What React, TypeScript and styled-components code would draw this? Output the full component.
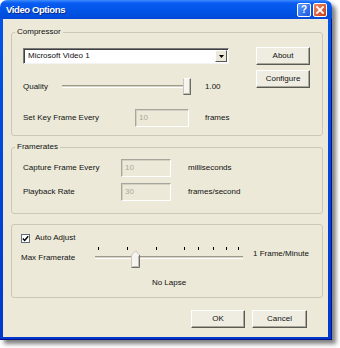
import React from "react";
import styled, { createGlobalStyle } from "styled-components";

const Global = createGlobalStyle`
  html, body { margin: 0; padding: 0; background: #ffffff; }
  body {
    font-family: "Liberation Sans", Arial, sans-serif;
    font-size: 8px;
    line-height: 10px;
    color: #111;
  }
  * { box-sizing: border-box; }
`;

const Stage = styled.div`
  width: 340px;
  height: 348px;
`;

const Window = styled.div`
  width: 332px;
  height: 340px;
  display: flex;
  flex-direction: column;
  border-radius: 7px 7px 0 0;
  box-shadow: 4px 4px 4px rgba(0, 0, 0, 0.5);
  overflow: hidden;
`;

const TitleBar = styled.div`
  height: 19px;
  flex: none;
  display: flex;
  align-items: center;
  padding: 0 5px 0 6px;
  background: linear-gradient(#3d8dff 0px, #0a5cf2 3px, #0055e6 55%, #0049da 100%);
`;

const TitleText = styled.div`
  flex: 1;
  color: #fff;
  font-weight: bold;
  font-size: 9.5px;
  letter-spacing: -0.4px;
  text-shadow: 1px 1px 0 #0a2a8a;
`;

const CaptionButton = styled.div<{ $kind: "help" | "close" }>`
  width: 14px;
  height: 14px;
  margin-left: 2px;
  border: 1px solid #fff;
  border-radius: 2px;
  display: flex;
  align-items: center;
  justify-content: center;
  color: #fff;
  font-weight: bold;
  font-size: 10px;
  background: ${(p) =>
    p.$kind === "help"
      ? "linear-gradient(135deg, #5d9bff, #1a56e0)"
      : "linear-gradient(135deg, #f08a64, #c93e18)"};
`;

const Frame = styled.div`
  flex: 1;
  display: flex;
  padding: 0 3px 2px 3px;
  background: linear-gradient(to bottom, #0055e6, #0038cc);
  border-right: 1px solid #00138c;
  border-bottom: 1px solid #00138c;
`;

const Client = styled.div`
  flex: 1;
  background: #ece9d8;
  display: flex;
  flex-direction: column;
  padding: 13px 5px 0 8px;
`;

const Group = styled.div<{ $h: number; $mt: number }>`
  position: relative;
  height: ${(p) => p.$h}px;
  margin-top: ${(p) => p.$mt}px;
  border: 1px solid #cbc8b6;
  border-radius: 3px;
`;

const Legend = styled.span`
  position: absolute;
  top: -6px;
  left: 3px;
  padding: 0 2px;
  background: #ece9d8;
`;

const CompressorBody = styled.div`
  display: grid;
  grid-template-columns: 1fr 54px;
  column-gap: 10px;
  padding: 14px 12px 0 11px;
`;

const Column = styled.div`
  display: flex;
  flex-direction: column;
`;

const Combo = styled.div`
  margin-top: 1px;
  width: 206px;
  height: 16px;
  display: flex;
  align-items: center;
  background: #fff;
  border: 1px solid;
  border-color: #7a7a7a #f4f4f4 #f4f4f4 #7a7a7a;
  box-shadow: inset 1px 1px 0 #404040;
  padding: 1px 1px 1px 4px;
`;

const ComboText = styled.span`
  flex: 1;
`;

const DropButton = styled.div`
  width: 12px;
  height: 12px;
  display: flex;
  align-items: center;
  justify-content: center;
  background: #ece9d8;
  border: 1px solid;
  border-color: #fff #555 #555 #fff;
`;

const Row = styled.div<{ $mt: number; $h?: number }>`
  display: flex;
  align-items: center;
  margin-top: ${(p) => p.$mt}px;
  height: ${(p) => p.$h ?? 18}px;
`;

const Label = styled.span<{ $w: number }>`
  width: ${(p) => p.$w}px;
  flex: none;
  white-space: nowrap;
`;

const Unit = styled.span<{ $ml: number }>`
  margin-left: ${(p) => p.$ml}px;
  white-space: nowrap;
`;

const Field = styled.div<{ $w: number }>`
  width: ${(p) => p.$w}px;
  height: 18px;
  flex: none;
  display: flex;
  align-items: center;
  padding-left: 3px;
  color: #aca899;
  background: #ece9d8;
  border: 1px solid;
  border-color: #a7a69c #ffffff #ffffff #a7a69c;
  box-shadow: inset 1px 1px 0 #d4d0c4;
`;

const Button = styled.div<{ $w: number; $mt?: number }>`
  width: ${(p) => p.$w}px;
  height: 18px;
  margin-top: ${(p) => p.$mt ?? 0}px;
  display: flex;
  align-items: center;
  justify-content: center;
  background: #efede2;
  border: 1px solid;
  border-color: #ffffff #5a5a54 #5a5a54 #ffffff;
  box-shadow: inset -1px -1px 0 #aca899;
`;

const Slider = styled.div<{ $w: number; $h: number }>`
  position: relative;
  width: ${(p) => p.$w}px;
  height: ${(p) => p.$h}px;
  flex: none;
`;

const Track = styled.div<{ $top: number }>`
  position: absolute;
  left: 0;
  right: 0;
  top: ${(p) => p.$top}px;
  height: 3px;
  border-top: 1px solid #9d9a8c;
  border-bottom: 1px solid #ffffff;
  background: #d6d3c4;
`;

const Thumb = styled.div<{ $top: number }>`
  position: absolute;
  top: ${(p) => p.$top}px;
  width: 8px;
  height: 17px;
  background: #f5f4ef;
  border: 1px solid;
  border-color: #ffffff #6e6d66 #6e6d66 #c9c7ba;
  box-shadow: inset -1px -1px 0 #bdbbb0;
`;

const PointThumb = styled.svg`
  position: absolute;
  top: 4px;
`;

const Tick = styled.div`
  position: absolute;
  top: 1px;
  width: 1px;
  height: 3px;
  background: #000;
`;

const FramerateBody = styled.div`
  display: flex;
  flex-direction: column;
  padding: 11px 0 0 11px;
`;

const AdjustBody = styled.div`
  display: flex;
  flex-direction: column;
  padding: 8px 0 0 8px;
`;

const CheckRow = styled.div`
  display: flex;
  align-items: center;
  height: 10px;
  margin-left: 1px;
`;

const CheckBox = styled.div`
  width: 9px;
  height: 9px;
  background: #fff;
  border: 1px solid #5e6a78;
  display: flex;
  align-items: center;
  justify-content: center;
  margin-right: 5px;
`;

const MaxRow = styled.div`
  display: flex;
  margin-top: 3px;
  padding-left: 1px;
`;

const MaxLabel = styled.span`
  width: 74px;
  margin-top: 7px;
  white-space: nowrap;
`;

const SliderColumn = styled.div`
  display: flex;
  flex-direction: column;
  align-items: center;
`;

const Caption = styled.span`
  margin-top: 10px;
  white-space: nowrap;
`;

const RateText = styled.span`
  margin: 3px 0 0 10px;
  white-space: nowrap;
`;

const ButtonRow = styled.div`
  display: flex;
  justify-content: flex-end;
  gap: 7px;
  margin-top: 12px;
  padding-right: 16px;
`;

const ticks = [3, 32, 61, 89, 103, 118, 131, 143];

export default function App() {
  return (
    <Stage>
      <Global />
      <Window>
        <TitleBar>
          <TitleText>Video Options</TitleText>
          <CaptionButton $kind="help">?</CaptionButton>
          <CaptionButton $kind="close">
            <svg width="8" height="8" viewBox="0 0 8 8">
              <path d="M1 1 L7 7 M7 1 L1 7" stroke="#fff" strokeWidth="1.8" strokeLinecap="square" />
            </svg>
          </CaptionButton>
        </TitleBar>
        <Frame>
          <Client>
            <Group $h={104} $mt={0}>
              <Legend>Compressor</Legend>
              <CompressorBody>
                <Column>
                  <Combo>
                    <ComboText>Microsoft Video 1</ComboText>
                    <DropButton>
                      <svg width="5" height="3" viewBox="0 0 5 3">
                        <path d="M0 0 H5 L2.5 3 Z" fill="#000" />
                      </svg>
                    </DropButton>
                  </Combo>
                  <Row $mt={14}>
                    <Label $w={39}>Quality</Label>
                    <Slider $w={129} $h={18}>
                      <Track $top={7} />
                      <Thumb $top={0} style={{ left: 121 }} />
                    </Slider>
                    <Unit $ml={14}>1.00</Unit>
                  </Row>
                  <Row $mt={13}>
                    <Label $w={112}>Set Key Frame Every</Label>
                    <Field $w={54}>10</Field>
                    <Unit $ml={16}>frames</Unit>
                  </Row>
                </Column>
                <Column>
                  <Button $w={54}>About</Button>
                  <Button $w={54} $mt={5}>
                    Configure
                  </Button>
                </Column>
              </CompressorBody>
            </Group>

            <Group $h={67} $mt={11}>
              <Legend>Framerates</Legend>
              <FramerateBody>
                <Row $mt={0}>
                  <Label $w={98}>Capture Frame Every</Label>
                  <Field $w={50}>10</Field>
                  <Unit $ml={17}>milliseconds</Unit>
                </Row>
                <Row $mt={6}>
                  <Label $w={98}>Playback Rate</Label>
                  <Field $w={50}>30</Field>
                  <Unit $ml={17}>frames/second</Unit>
                </Row>
              </FramerateBody>
            </Group>

            <Group $h={74} $mt={10}>
              <AdjustBody>
                <CheckRow>
                  <CheckBox>
                    <svg width="7" height="7" viewBox="0 0 7 7">
                      <path d="M0.8 3.4 L2.7 5.4 L6.2 1.2" stroke="#000" strokeWidth="1.4" fill="none" />
                    </svg>
                  </CheckBox>
                  <span>Auto Adjust</span>
                </CheckRow>
                <MaxRow>
                  <MaxLabel>Max Framerate</MaxLabel>
                  <SliderColumn>
                    <Slider $w={148} $h={22}>
                      {ticks.map((t) => (
                        <Tick key={t} style={{ left: t }} />
                      ))}
                      <Track $top={10} />
                      <PointThumb width="9" height="18" viewBox="0 0 9 18" style={{ left: 36 }}>
                        <path d="M0.5 5 L4.5 0.8 L8.5 5 V17.5 H0.5 Z" fill="#f5f4ef" stroke="#c9c7ba" />
                        <path d="M8.5 5 V17.5 H0.5" fill="none" stroke="#6e6d66" />
                        <path d="M7.5 6 V16.5 H1.5" fill="none" stroke="#bdbbb0" />
                      </PointThumb>
                    </Slider>
                    <Caption>No Lapse</Caption>
                  </SliderColumn>
                  <RateText>1 Frame/Minute</RateText>
                </MaxRow>
              </AdjustBody>
            </Group>

            <ButtonRow>
              <Button $w={54}>OK</Button>
              <Button $w={55}>Cancel</Button>
            </ButtonRow>
          </Client>
        </Frame>
      </Window>
    </Stage>
  );
}
